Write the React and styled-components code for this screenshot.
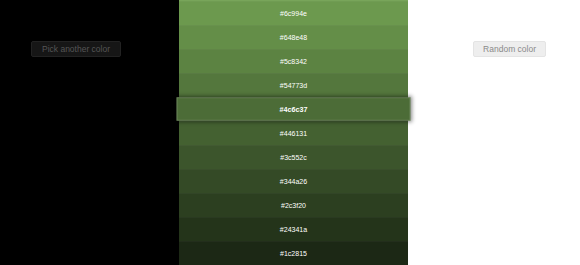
import React from "react";
import styled, { createGlobalStyle } from "styled-components";

const Global = createGlobalStyle`
  html, body { margin: 0; padding: 0; }
  body {
    width: 580px;
    height: 265px;
    overflow: hidden;
    font-family: "Liberation Sans", Arial, sans-serif;
    background: #fff;
  }
`;

const Page = styled.div`
  display: flex;
  width: 580px;
  height: 265px;
`;

const Side = styled.div`
  flex: ${(p) => (p.$dark ? "0 0 179px" : "1 1 auto")};
  background: ${(p) => (p.$dark ? "#000" : "#fff")};
  display: flex;
  align-items: flex-start;
  justify-content: ${(p) => (p.$dark ? "flex-start" : "flex-end")};
  padding: 41px ${(p) => (p.$dark ? "0" : "34px")} 0 ${(p) => (p.$dark ? "31px" : "0")};
  box-sizing: border-box;
`;

const Button = styled.button`
  box-sizing: border-box;
  white-space: nowrap;
  height: 16px;
  padding: 0 ${(p) => (p.$dark ? "10px" : "9px")};
  margin: 0;
  border-radius: 2px;
  font-family: "Liberation Sans", Arial, sans-serif;
  font-size: 8.5px;
  line-height: 14px;
  cursor: pointer;
  background: ${(p) => (p.$dark ? "#161616" : "#eeeeee")};
  border: 1px solid ${(p) => (p.$dark ? "#222222" : "#e4e4e4")};
  color: ${(p) => (p.$dark ? "#555555" : "#8a8a8a")};
`;

const Column = styled.div`
  flex: 0 0 229px;
  display: flex;
  flex-direction: column;
  border-top: 1px solid #78a55a;
  box-sizing: border-box;
  background: #1c2815;
`;

const Swatch = styled.div`
  height: 24px;
  flex: 0 0 24px;
  display: flex;
  align-items: center;
  justify-content: center;
  color: #fff;
  font-size: 7px;
  font-weight: ${(p) => (p.$active ? 700 : 400)};
  box-sizing: border-box;
  border-top: 1px solid rgba(255, 255, 255, 0.03);
  position: relative;
  ${(p) =>
    p.$active &&
    `
    z-index: 2;
    transform: scale(1.022, 0.98);
    border: 1px solid rgba(255,255,255,0.18);
    box-shadow: 0 0 4px 1px rgba(0,0,0,0.45);
  `}
`;

const colors = [
  "#6c994e",
  "#648e48",
  "#5c8342",
  "#54773d",
  "#4c6c37",
  "#446131",
  "#3c552c",
  "#344a26",
  "#2c3f20",
  "#24341a",
  "#1c2815",
];

export default function App() {
  return (
    <>
      <Global />
      <Page>
        <Side $dark>
          <Button $dark>Pick another color</Button>
        </Side>
        <Column>
          {colors.map((c) => (
            <Swatch
              key={c}
              $active={c === "#4c6c37"}
              style={{ background: c }}
            >
              {c}
            </Swatch>
          ))}
        </Column>
        <Side>
          <Button>Random color</Button>
        </Side>
      </Page>
    </>
  );
}
